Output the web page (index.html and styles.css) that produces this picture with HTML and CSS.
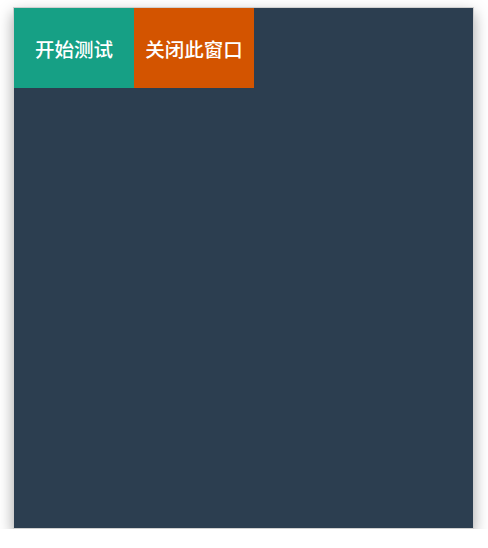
FILE: index.html
```html
<!DOCTYPE html>
<html>
<head>
<meta charset="utf-8">
<link rel="stylesheet" href="styles.css">
</head>
<body>
<div class="panel">
  <div class="toolbar">
    <button class="btn btn-start">开始测试</button>
    <button class="btn btn-close">关闭此窗口</button>
  </div>
</div>
</body>
</html>
```
FILE: styles.css
```css
html, body {
  margin: 0;
  padding: 0;
  background: #ffffff;
}
body {
  padding: 7px 14px 0 13px;
  font-family: "Noto Sans CJK SC", "Noto Sans", sans-serif;
}
.panel {
  width: 459px;
  height: 520px;
  background: #2c3e50;
  border: 1px solid #d0d0d0;
  box-shadow: 0 6px 14px rgba(0, 0, 0, 0.35);
}
.toolbar {
  display: flex;
}
.btn {
  width: 120px;
  height: 80px;
  border: none;
  margin: 0;
  padding: 0;
  color: #ffffff;
  font-family: "Noto Sans CJK SC", sans-serif;
  font-size: 19.5px;
  font-weight: 500;
  display: flex;
  align-items: center;
  justify-content: center;
}
.btn-start {
  background: #16a085;
}
.btn-close {
  background: #d35400;
}
```
